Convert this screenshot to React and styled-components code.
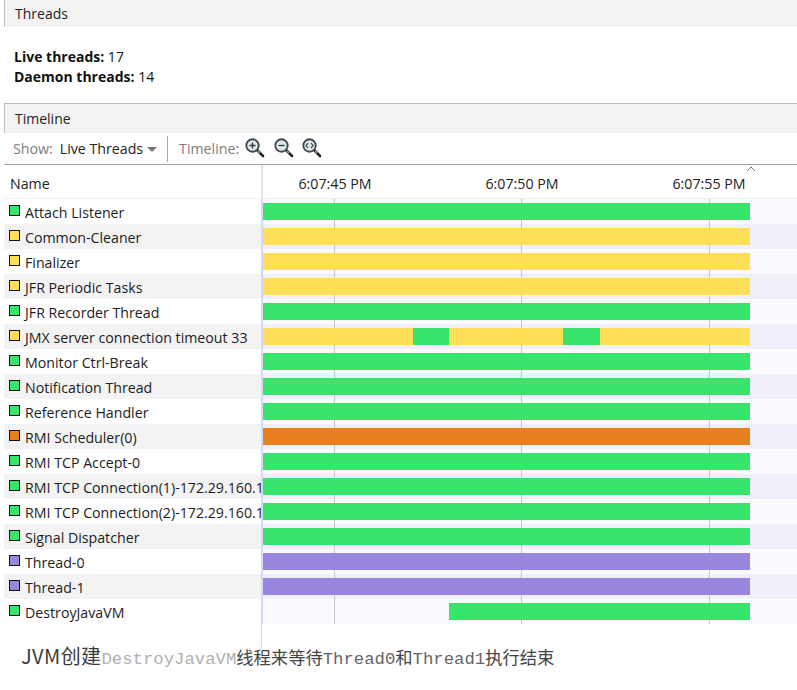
import React from 'react';
import styled, { createGlobalStyle } from 'styled-components';

const GlobalStyle = createGlobalStyle`
  html, body {
    margin: 0;
    padding: 0;
    background: #fff;
    overflow: hidden;
  }
  body {
    font-family: 'Open Sans', 'Liberation Sans', sans-serif;
    font-size: 14px;
    color: #1a1a1a;
  }
`;

const GREEN = '#39e46a';
const YELLOW = '#ffdf58';
const ORANGE = '#e8801f';
const PURPLE = '#9a86de';

const threads = [
  { name: 'Attach Listener', color: GREEN, bars: [{ w: 487, c: GREEN }] },
  { name: 'Common-Cleaner', color: YELLOW, bars: [{ w: 487, c: YELLOW }] },
  { name: 'Finalizer', color: YELLOW, bars: [{ w: 487, c: YELLOW }] },
  { name: 'JFR Periodic Tasks', color: YELLOW, bars: [{ w: 487, c: YELLOW }] },
  { name: 'JFR Recorder Thread', color: GREEN, bars: [{ w: 487, c: GREEN }] },
  {
    name: 'JMX server connection timeout 33',
    color: YELLOW,
    bars: [
      { w: 150, c: YELLOW },
      { w: 36, c: GREEN },
      { w: 114, c: YELLOW },
      { w: 37, c: GREEN },
      { w: 150, c: YELLOW },
    ],
  },
  { name: 'Monitor Ctrl-Break', color: GREEN, bars: [{ w: 487, c: GREEN }] },
  { name: 'Notification Thread', color: GREEN, bars: [{ w: 487, c: GREEN }] },
  { name: 'Reference Handler', color: GREEN, bars: [{ w: 487, c: GREEN }] },
  { name: 'RMI Scheduler(0)', color: ORANGE, bars: [{ w: 487, c: ORANGE }] },
  { name: 'RMI TCP Accept-0', color: GREEN, bars: [{ w: 487, c: GREEN }] },
  { name: 'RMI TCP Connection(1)-172.29.160.1', color: GREEN, bars: [{ w: 487, c: GREEN }] },
  { name: 'RMI TCP Connection(2)-172.29.160.1', color: GREEN, bars: [{ w: 487, c: GREEN }] },
  { name: 'Signal Dispatcher', color: GREEN, bars: [{ w: 487, c: GREEN }] },
  { name: 'Thread-0', color: PURPLE, bars: [{ w: 487, c: PURPLE }] },
  { name: 'Thread-1', color: PURPLE, bars: [{ w: 487, c: PURPLE }] },
  {
    name: 'DestroyJavaVM',
    color: GREEN,
    bars: [
      { w: 186, c: 'transparent' },
      { w: 301, c: GREEN },
    ],
  },
];

const Page = styled.div`
  width: 797px;
  height: 690px;
  padding-left: 4px;
  box-sizing: border-box;
  overflow: hidden;
`;

const SectionBar = styled.div`
  height: ${(p) => p.$height}px;
  background: #f3f3f3;
  border-left: 1px solid #c4c4c4;
  border-top: ${(p) => (p.$ruled ? '1px solid #bcbcbc' : 'none')};
  padding-left: 10px;
  display: flex;
  align-items: center;
  font-size: 14px;
  color: #222;
`;

const Summary = styled.div`
  height: 76px;
  padding: 20px 0 0 10px;
  box-sizing: border-box;
  font-size: 14px;
  line-height: 20px;
  color: #111;
`;

const Strong = styled.b`
  font-weight: 700;
`;

const Toolbar = styled.div`
  height: 31px;
  display: flex;
  align-items: center;
  padding-left: 9px;
  border-bottom: 1px solid #a3a3a3;
  font-size: 14.2px;
`;

const Muted = styled.span`
  color: #7c7c7c;
`;

const ShowValue = styled.span`
  margin-left: 7px;
  color: #222;
`;

const Caret = styled.span`
  width: 0;
  height: 0;
  margin: 2px 10px 0 4px;
  border-left: 5px solid transparent;
  border-right: 5px solid transparent;
  border-top: 5px solid #777;
`;

const Divider = styled.span`
  width: 1px;
  height: 26px;
  background: #a8a8a8;
  margin-right: 11px;
`;

const IconRow = styled.span`
  display: flex;
  gap: 8.5px;
  margin: -2px 0 0 6px;
`;

const Table = styled.div`
  position: relative;
`;

const HeaderRow = styled.div`
  display: grid;
  grid-template-columns: 259px 1fr;
  height: 33px;
  border-bottom: 1px solid #eeeef4;
`;

const HeaderName = styled.div`
  display: flex;
  align-items: center;
  padding: 4px 0 0 6px;
  border-right: 2px solid #e4e4e8;
  font-size: 14.2px;
  color: #222;
`;

const TimeAxis = styled.div`
  position: relative;
`;

const TimeLabel = styled.span`
  position: absolute;
  top: 9px;
  left: ${(p) => p.$x}px;
  transform: translateX(-50%);
  font-size: 14.2px;
  color: #222;
  white-space: nowrap;
`;

const SortMark = styled.svg`
  position: absolute;
  left: 483px;
  top: 1px;
`;

const Row = styled.div`
  display: grid;
  grid-template-columns: 259px 1fr;
  height: 25px;
`;

const NameCell = styled.div`
  display: flex;
  align-items: center;
  gap: 5px;
  padding: 2px 0 0 5px;
  background: ${(p) => (p.$alt ? '#f3f3f3' : '#fff')};
  border-right: 2px solid #cfdaf7;
  overflow: hidden;
  white-space: nowrap;
  font-size: 14.2px;
  color: #1c1c1c;
`;

const Swatch = styled.span`
  flex: none;
  width: 9px;
  height: 9px;
  margin-top: -5px;
  background: ${(p) => p.$color};
  border: 1px solid #111;
`;

const Track = styled.div`
  display: flex;
  padding: 4px 0;
  background: ${(p) => (p.$alt ? '#f0f0fa' : '#fafaff')};
`;

const Segment = styled.div`
  position: relative;
  z-index: 1;
  height: 17px;
  width: ${(p) => p.$w}px;
  background: ${(p) => p.$c};
`;

const GridLine = styled.div`
  position: absolute;
  top: 34px;
  bottom: 27px;
  left: ${(p) => p.$x}px;
  width: 1px;
  background: #c6c6c6;
`;

const BottomGap = styled.div`
  width: 257px;
  height: 27px;
  border-right: 1px solid #d6e0f8;
`;

const Caption = styled.div`
  margin: -8px 0 0 17px;
  height: 26px;
  line-height: 26px;
  font-family: 'Noto Sans CJK SC', 'Noto Sans', sans-serif;
  font-size: 17.3px;
  color: #444;
  white-space: nowrap;
`;

const Lead = styled.span`
  font-size: 20px;
  letter-spacing: 0.4px;
  color: #3c3c3c;
`;

const Code = styled.span`
  font-family: 'Liberation Mono', 'Noto Sans CJK SC', monospace;
  color: ${(p) => (p.$faint ? '#b0b0b0' : '#666')};
`;

function Magnifier({ kind }) {
  return (
    <svg width="20" height="20" viewBox="0 0 20 20">
      <path d="M12 12l6 6" stroke="#222" strokeWidth="2.6" strokeLinecap="round" />
      <path d="M13 13l2 2" stroke="#999" strokeWidth="1.4" />
      <circle cx="7.5" cy="7.5" r="6.2" fill="#dfe9ee" stroke="#3f4a4e" strokeWidth="1.9" />
      {kind === 'in' && <path d="M4.5 7.5h6M7.5 4.5v6" stroke="#333" strokeWidth="1.3" />}
      {kind === 'out' && <path d="M4.5 7.5h6" stroke="#333" strokeWidth="1.3" />}
      {kind === 'fit' && (
        <path d="M6 5L4 7.5 6 10M9 5l2 2.5L9 10" fill="none" stroke="#333" strokeWidth="1.2" />
      )}
    </svg>
  );
}

export default function App() {
  return (
    <Page>
      <GlobalStyle />
      <SectionBar $height={27}>Threads</SectionBar>
      <Summary>
        <div>
          <Strong>Live threads:</Strong> 17
        </div>
        <div>
          <Strong>Daemon threads:</Strong> 14
        </div>
      </Summary>
      <SectionBar $height={29} $ruled>
        Timeline
      </SectionBar>
      <Toolbar>
        <Muted>Show:</Muted>
        <ShowValue>Live Threads</ShowValue>
        <Caret />
        <Divider />
        <Muted>Timeline:</Muted>
        <IconRow>
          <Magnifier kind="in" />
          <Magnifier kind="out" />
          <Magnifier kind="fit" />
        </IconRow>
      </Toolbar>
      <Table>
        <HeaderRow>
          <HeaderName>Name</HeaderName>
          <TimeAxis>
            <TimeLabel $x={72}>6:07:45 PM</TimeLabel>
            <TimeLabel $x={259}>6:07:50 PM</TimeLabel>
            <TimeLabel $x={446}>6:07:55 PM</TimeLabel>
            <SortMark width="10" height="6" viewBox="0 0 10 6">
              <path d="M1 5l4-4 4 4" fill="none" stroke="#777" strokeWidth="1" />
            </SortMark>
          </TimeAxis>
        </HeaderRow>
        {threads.map((t, i) => (
          <Row key={t.name}>
            <NameCell $alt={i % 2 === 1}>
              <Swatch $color={t.color} />
              {t.name}
            </NameCell>
            <Track $alt={i % 2 === 1}>
              {t.bars.map((b, j) => (
                <Segment key={j} $w={b.w} $c={b.c} />
              ))}
            </Track>
          </Row>
        ))}
        <GridLine $x={330} />
        <GridLine $x={517} />
        <GridLine $x={705} />
        <BottomGap />
      </Table>
      <Caption>
        <Lead>JVM创建</Lead>
        <Code $faint>DestroyJavaVM</Code>线程来等待<Code>Thread0</Code>和<Code>Thread1</Code>执行结束
      </Caption>
    </Page>
  );
}
